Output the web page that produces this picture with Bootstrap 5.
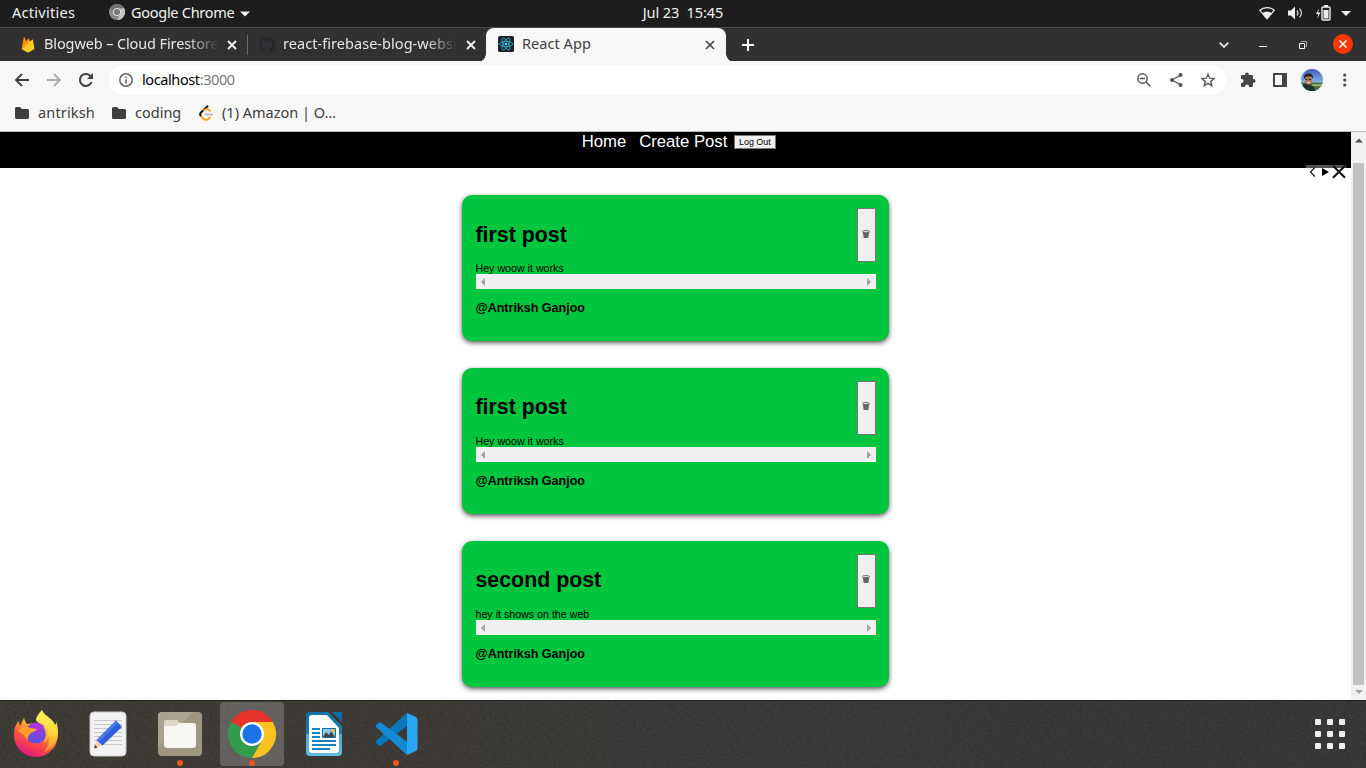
<!DOCTYPE html>
<html lang="en">
<head>
<meta charset="utf-8">
<meta name="viewport" content="width=device-width, initial-scale=1">
<title>React App</title>
<link href="https://cdn.jsdelivr.net/npm/bootstrap@5.3.0/dist/css/bootstrap.min.css" rel="stylesheet">
<style>
body{width:1366px;height:768px;overflow:hidden;font-family:"Noto Sans","Open Sans",sans-serif;font-size:14.5px;line-height:20px;color:#3c3c3c}
svg{display:block;flex:none}
.sysbar{height:27px;background:#1d1d1d;color:#f2f2f2}
.sysbar span,.tabstrip span{padding-bottom:3px}
.clock{letter-spacing:-.08px;white-space:pre}
.tabstrip{height:34px;background:#333031;border-top:1px solid #484647;color:#e8e8e8}
.tab-title{overflow:hidden}
.fade-end{-webkit-mask-image:linear-gradient(90deg,#000 82%,transparent);mask-image:linear-gradient(90deg,#000 82%,transparent)}
.tab-active{width:240px;height:34px;background:#f7f7f7;color:#414141;border-radius:8px 8px 0 0}
.tab-active::before,.tab-active::after{content:"";position:absolute;bottom:0;width:8px;height:8px}
.tab-active::before{left:-8px;background:radial-gradient(circle at 0 0,transparent 7.5px,#f7f7f7 8px)}
.tab-active::after{right:-8px;background:radial-gradient(circle at 100% 0,transparent 7.5px,#f7f7f7 8px)}
.tab-divider{width:1px;height:20px;background:#6b696a}
.win-close{width:20px;height:20px;background:#fa3600}
.toolbar{height:38px;background:#f7f7f7}
.omnibox{width:1118px;height:30px;border-radius:15px;background:#fff}
.bookmarks{height:33px;background:#f7f7f7;border-bottom:1px solid #b9bbb9}
.bookmarks span{padding-bottom:2px}
.viewport-area{height:568px;background:#fff;font-family:"Liberation Sans",Arial,sans-serif;color:#000}
.site-nav{height:36px;background:#000;color:#fff;font-size:16.7px;line-height:19px}
.logout{width:42px;height:14px;border:1px solid #767676;background:#efefef;color:#000;font-size:8.9px;line-height:12px;margin:3px 0 0 6.5px}
.post{width:427px;height:146px;border-radius:10px;background:#00c53f;padding:13px 13.5px 0;box-shadow:0 2px 5px rgba(0,0,0,.65)}
.post-head{height:54px}
.post-title{font-size:21.35px;font-weight:700;line-height:26px;margin:-2px 0 0}
.trash{width:19px;height:54px;background:#efefef;border:1px solid #767676}
.post-text{font-size:10.67px;line-height:12px;height:12px}
.hscroll{width:400px;height:15px;background:#f0f0f0}
.author{font-size:12.5px;font-weight:700;line-height:14px;margin:12px 0 0}
.vscroll{width:15px;background:#f1f1f1}
.thumb{width:11px;height:522px;background:#c1c1c1;margin-top:20px}
.adbar{top:33px;right:5px;width:40px;height:15px;background:linear-gradient(rgba(255,255,255,.32) 3px,transparent 3px)}
.dock{height:68px;background:linear-gradient(90deg,#413d38,#403d39 32%,#3b3d3a 50%,#393a37 75%,#373a38);border-top:1px solid #252421}
.dock-item{width:64px;height:64px;border-radius:4px;margin-right:8px}
.dock-active{background:rgba(255,255,255,.2)}
.dock-dot{width:6px;height:6px;border-radius:50%;background:#e95420;bottom:0;left:29px}
</style>
</head>
<body class="d-flex flex-column position-relative">

<div class="sysbar d-flex align-items-center justify-content-between position-relative">
  <div class="d-flex align-items-center">
    <span style="margin-left:12px;width:97px;letter-spacing:.28px">Activities</span>
    <svg class="mb-1" width="16" height="16" viewBox="0 0 16 16"><circle cx="8" cy="8" r="8" fill="#8a8a8a"/><path d="M8 0a8 8 0 0 1 7 4H8a4 4 0 0 0-4 3L1.4 4A8 8 0 0 1 8 0" fill="#6f6f6f"/><path d="M15 4a8 8 0 0 1-7 12l3.5-6L11 5z" fill="#c6c6c6"/><circle cx="8" cy="8" r="4" fill="#ddd"/><circle cx="8" cy="8" r="3" fill="#777"/></svg>
    <span style="margin-left:6px;width:109px;letter-spacing:-.28px">Google Chrome</span>
    <svg width="10" height="6"><path d="M0 .5h10L5 5.5z" fill="#f2f2f2"/></svg>
  </div>
  <span class="clock position-absolute start-50 translate-middle-x">Jul 23  15:45</span>
  <div class="d-flex align-items-center">
    <svg style="margin-bottom:2px" width="107" height="18" viewBox="0 0 107 18"><path d="M.8 6.3C5 2.6 11 2.6 15.2 6.3L8 14.8z" fill="none" stroke="#eee" stroke-width="1.2"/><path d="M3.3 9c3-2 6.4-2 9.400 0L8 14.8z" fill="#eee"/><path d="M29 6.500h3l4-4v13l-4-4h-3z" fill="#eee"/><path d="M38 6.500q2 2.500 0 5M40.500 4.500q4 4.500 0 9" fill="none" stroke="#ccc" stroke-width="1.300"/><path d="M60 4.500 57 10h2.300l-1 4.500 3.200-6H59z" fill="#eee"/><rect x="63" y="3" width="8" height="13" rx="1" fill="none" stroke="#eee" stroke-width="1.400"/><path d="M65 1h4v2h-4zM64.500 6h5v8.500h-5z" fill="#eee"/><path d="M82 7h10l-5 5z" fill="#eee"/></svg>
  </div>
</div>

<div class="tabstrip d-flex align-items-center">
  <svg style="margin-left:20px" width="16" height="17" viewBox="0 0 16 17"><path d="M1.500 13 4 .5 7 6z" fill="#ff8f00"/><path d="M1.500 13 8.600 2l2 4.600z" fill="#ffa000"/><path d="M1.500 13 12.800 3.200 14.500 13 8 16.700z" fill="#ffca28"/></svg>
  <span class="tab-title fade-end text-nowrap" style="margin-left:8px;width:175px;letter-spacing:-.12px">Blogweb – Cloud Firestore</span>
  <svg style="margin-left:8px" width="10" height="10"><path d="m1 1 8 8m0-8L1 9" stroke="#f4f4f4" stroke-width="1.800"/></svg>
  <div class="tab-divider" style="margin-left:10px"></div>
  <svg style="margin-left:11px" width="16" height="16" viewBox="0 0 16 16"><path fill="#24292e" d="M8 0C3.58 0 0 3.58 0 8c0 3.54 2.29 6.53 5.47 7.59.4.07.55-.17.55-.38v-1.5c-2.01.37-2.53-.49-2.69-.94-.09-.23-.48-.94-.82-1.13-.28-.15-.68-.52-.01-.53.63-.01 1.08.58 1.23.82.72 1.21 1.87.87 2.33.66.07-.52.28-.87.51-1.07-1.78-.2-3.64-.89-3.64-3.95 0-.87.31-1.59.82-2.15-.08-.2-.36-1.02.08-2.12 0 0 .67-.21 2.2.82a7.4 7.4 0 0 1 4 0c1.53-1.04 2.2-.82 2.2-.82.44 1.1.16 1.92.08 2.12.51.56.82 1.27.82 2.15 0 3.07-1.87 3.75-3.65 3.95.29.25.54.73.54 1.48v2.2c0 .21.15.46.55.38A8 8 0 0 0 8 0"/></svg>
  <span class="tab-title fade-end text-nowrap" style="margin-left:8px;width:174px;letter-spacing:.05px">react-firebase-blog-websi</span>
  <svg style="margin-left:9px" width="10" height="10"><path d="m1 1 8 8m0-8L1 9" stroke="#f4f4f4" stroke-width="1.800"/></svg>
  <div class="tab-active position-relative d-flex align-items-center" style="margin-left:10px">
    <svg style="margin-left:12px;margin-bottom:1px" width="16" height="16" viewBox="0 0 16 16"><rect width="16" height="16" rx="1.500" fill="#20232a"/><g fill="none" stroke="#35b3ce" stroke-width=".8"><ellipse cx="8" cy="8" rx="6.600" ry="2.600"/><ellipse cx="8" cy="8" rx="6.600" ry="2.600" transform="rotate(60 8 8)"/><ellipse cx="8" cy="8" rx="6.600" ry="2.600" transform="rotate(120 8 8)"/></g><circle cx="8" cy="8" r="1.300" fill="#61dafb"/></svg>
    <span style="margin-left:8px;width:183px;letter-spacing:.05px">React App</span>
    <svg width="10" height="10"><path d="m1 1 8 8m0-8L1 9" stroke="#444" stroke-width="1.700"/></svg>
  </div>
  <svg style="margin-left:16px" width="12" height="12"><path d="M6 0v12M0 6h12" stroke="#fff" stroke-width="1.900"/></svg>
  <div class="ms-auto d-flex align-items-center">
    <svg style="margin-right:30px" width="10" height="6"><path d="m.7.7 4.300 4.200L9.300.7" fill="none" stroke="#eee" stroke-width="1.800"/></svg>
    <svg style="margin-right:32px" width="8" height="6"><path d="M0 4.500h8" stroke="#fff"/></svg>
    <svg style="margin-right:26px" width="8" height="8"><path d="M.5 2.500h5v5h-5z" fill="none" stroke="#fff"/><path d="M2 .5h5.500V6" fill="none" stroke="#aaa"/></svg>
    <div class="win-close rounded-circle d-flex align-items-center justify-content-center" style="margin-right:13px;margin-bottom:2px"><svg width="8" height="8"><path d="m.5.5 7 7m0-7-7 7" stroke="#fff" stroke-width="1.500"/></svg></div>
  </div>
</div>

<div class="toolbar d-flex align-items-center">
  <svg style="margin-left:14px" width="16" height="16"><path d="M15 8H2m6-6L2 8l6 6" fill="none" stroke="#3f3f3f" stroke-width="1.800"/></svg>
  <svg style="margin-left:16px" width="16" height="16"><path d="M1 8h13M8 2l6 6-6 6" fill="none" stroke="#a9a9a9" stroke-width="1.800"/></svg>
  <svg style="margin-left:16px" width="16" height="16"><path d="M13.500 10A6 6 0 1 1 12 3.600L13.500 5" fill="none" stroke="#3f3f3f" stroke-width="2"/><path d="M15 1v6H9z" fill="#3f3f3f"/></svg>
  <div class="omnibox d-flex align-items-center" style="margin-left:14px">
    <svg style="margin-left:11px" width="14" height="14"><circle cx="7" cy="7" r="6.200" fill="none" stroke="#5f6368" stroke-width="1.500"/><path d="M6.200 6.200h1.600v4.300H6.200zm0-2.700h1.600V5H6.200z" fill="#5f6368"/></svg>
    <span style="margin-left:9px;color:#777;letter-spacing:-.4px;padding-bottom:2px"><span style="color:#000">localhost</span>:3000</span>
    <svg class="ms-auto" style="margin-right:18px" width="15" height="14"><circle cx="5.500" cy="5.500" r="4.700" fill="none" stroke="#555" stroke-width="1.500"/><path d="M3 5.500h5M9 9l4.300 4.300" stroke="#555" stroke-width="1.500"/></svg>
    <svg style="margin-right:18px" width="13" height="14"><path d="M11 2 2 7l9 5" fill="none" stroke="#555" stroke-width="1.300"/><g fill="#555"><circle cx="10.500" cy="2" r="2"/><circle cx="2" cy="7" r="2"/><circle cx="10.500" cy="12" r="2"/></g></svg>
    <svg style="margin-right:11px" width="14" height="14"><path d="m7 1.300 1.700 3.900 4.300.4-3.200 2.800 1 4.200L7 10.400l-3.800 2.200 1-4.200L1 5.600l4.300-.4z" fill="none" stroke="#555" stroke-width="1.400"/></svg>
  </div>
  <svg style="margin-left:14px" width="16" height="16" viewBox="0 0 16 16"><path d="M1 4.200Q1 3 2.200 3H5v-.700a1.900 1.900 0 0 1 3.800 0V3h3.100Q13 3 13 4.200V7h.6a1.900 1.900 0 0 1 0 3.800H13v3q0 1.200-1.100 1.200H9v-.6a2 2 0 0 0-4 0v.6H2.200Q1 15 1 13.800V11h.6a2 2 0 0 0 0-4H1z" fill="#454545"/></svg>
  <svg style="margin-left:17px" width="14" height="14"><path d="M1 1h12v12H1z" fill="none" stroke="#454545" stroke-width="2"/><path d="M9 0h5v14H9z" fill="#454545"/></svg>
  <svg style="margin-left:14px" width="22" height="22" viewBox="0 0 22 22"><defs><clipPath id="avatar"><circle cx="11" cy="11" r="11"/></clipPath><linearGradient id="sky" x2="0" y2="1"><stop stop-color="#3e56b9"/><stop offset=".6" stop-color="#86b4ea"/></linearGradient></defs><g clip-path="url(#avatar)"><path fill="url(#sky)" d="M0 0h22v22H0z"/><path fill="#4d7338" d="M0 13.500h22V22H0z"/><path fill="#9fc276" d="M11 15.500h11V17H11z"/><path fill="#1f3234" d="M1 22l1-6 4-2 6 3 3 5z"/><ellipse cx="7.500" cy="10.800" rx="3.600" ry="5" fill="#b77956"/><path fill="#211d1d" d="M3 10C2 2.500 13 3 12 9.500L10.500 7.500H5zM4.500 10h2v1h-2zm3.500 0h2v1H8z"/><path fill="#fff" d="M6.300 13.200h2.800v.8H6.300z"/></g></svg>
  <svg style="margin-left:20px" width="4" height="14"><g fill="#454545"><circle cx="1.700" cy="2" r="1.600"/><circle cx="1.700" cy="7" r="1.600"/><circle cx="1.700" cy="12" r="1.600"/></g></svg>
</div>

<div class="bookmarks d-flex align-items-center pb-1">
  <svg style="margin-left:15px" width="14" height="12"><path d="M0 1.500Q0 0 1.500 0H5l2 2h5.500Q14 2 14 3.500v7q0 1.500-1.500 1.500h-11Q0 12 0 10.500z" fill="#3f3f3f"/></svg>
  <span style="margin-left:9px;width:74px;letter-spacing:.15px">antriksh</span>
  <svg width="14" height="12"><path d="M0 1.500Q0 0 1.500 0H5l2 2h5.500Q14 2 14 3.500v7q0 1.500-1.500 1.500h-11Q0 12 0 10.500z" fill="#3f3f3f"/></svg>
  <span style="margin-left:9px;width:64px">coding</span>
  <svg width="14" height="16" viewBox="0 0 14 16"><path d="m9 .8-7 6.700q-1.700 1.800 0 3.800" fill="none" stroke="#111" stroke-width="2"/><path d="m4 5.500 2.500-1.300q1.500-.8 3 .3l2 1.700" fill="none" stroke="#ffa116" stroke-width="1.800"/><path d="m2 11.300 2.500 2.500Q7 15.800 9.500 13.800l2-1.800" fill="none" stroke="#ffa116" stroke-width="2"/><path d="M6 9.500h8" stroke="#b3b3b3" stroke-width="1.800"/></svg>
  <span class="text-nowrap" style="margin-left:9px;letter-spacing:0">(1) Amazon | O…</span>
</div>

<div class="viewport-area d-flex position-relative overflow-hidden">
  <main class="flex-grow-1 position-relative">
    <nav class="site-nav d-flex justify-content-center align-items-start" style="padding-left:6.5px">
      <span style="margin-right:13px">Home</span><span>Create Post</span>
      <button class="logout p-0 rounded-0 text-nowrap">Log Out</button>
    </nav>
    <div class="adbar position-absolute"><svg width="40" height="15"><path d="M8.800 2.500 4.500 7l4.300 4.500" fill="none" stroke="#111" stroke-width="1.200"/><path d="m27 .8 12 12m0-12-12 12" stroke="#111" stroke-width="2.100"/><path d="M16 3 23 7l-7 4z" fill="#000"/></svg></div>
    <div class="d-flex flex-column align-items-center" style="gap:27px;padding-top:27px">
      <article class="post">
        <div class="post-head d-flex align-items-center justify-content-between"><h1 class="post-title mt-0">first post</h1><button class="trash p-0 d-flex align-items-center justify-content-center" aria-label="Delete"><svg style="margin-bottom:2px" width="8" height="9"><path d="m.7 1.800 1 6.200h4.600l1-6.200z" fill="#666"/><ellipse cx="4" cy="1.700" rx="3.500" ry="1.100" fill="#eee" stroke="#444" stroke-width=".8"/></svg></button></div>
        <div class="post-text">Hey woow it works</div>
        <div class="hscroll d-flex justify-content-between align-items-center px-1"><svg width="6" height="8"><path d="M5 0v8L1 4z" fill="#a3a3a3"/></svg><svg width="6" height="8"><path d="M1 0v8l4-4z" fill="#a3a3a3"/></svg></div>
        <h3 class="author">@Antriksh Ganjoo</h3>
      </article>
      <article class="post">
        <div class="post-head d-flex align-items-center justify-content-between"><h1 class="post-title">first post</h1><button class="trash p-0 d-flex align-items-center justify-content-center" aria-label="Delete"><svg class="mb-1" width="8" height="9"><path d="m.7 1.800 1 6.200h4.600l1-6.200z" fill="#666"/><ellipse cx="4" cy="1.700" rx="3.500" ry="1.100" fill="#eee" stroke="#444" stroke-width=".8"/></svg></button></div>
        <div class="post-text">Hey woow it works</div>
        <div class="hscroll d-flex justify-content-between align-items-center px-1"><svg width="6" height="8"><path d="M5 0v8L1 4z" fill="#a3a3a3"/></svg><svg width="6" height="8"><path d="M1 0v8l4-4z" fill="#a3a3a3"/></svg></div>
        <h3 class="author">@Antriksh Ganjoo</h3>
      </article>
      <article class="post">
        <div class="post-head d-flex align-items-center justify-content-between"><h1 class="post-title">second post</h1><button class="trash p-0 d-flex align-items-center justify-content-center" aria-label="Delete"><svg class="mb-1" width="8" height="9"><path d="m.7 1.800 1 6.200h4.600l1-6.200z" fill="#666"/><ellipse cx="4" cy="1.700" rx="3.500" ry="1.100" fill="#eee" stroke="#444" stroke-width=".8"/></svg></button></div>
        <div class="post-text">hey it shows on the web</div>
        <div class="hscroll d-flex justify-content-between align-items-center px-1"><svg width="6" height="8"><path d="M5 0v8L1 4z" fill="#a3a3a3"/></svg><svg width="6" height="8"><path d="M1 0v8l4-4z" fill="#a3a3a3"/></svg></div>
        <h3 class="author">@Antriksh Ganjoo</h3>
      </article>
    </div>
  </main>
  <div class="vscroll d-flex flex-column align-items-center">
    <svg style="margin-top:6px" width="8" height="5"><path d="M0 4.500h8l-4-4z" fill="#505050"/></svg>
    <div class="thumb"></div>
    <svg style="margin-top:5px" width="8" height="5"><path d="M0 0h8L4 4z" fill="#a3a3a3"/></svg>
  </div>
</div>

<div class="dock d-flex align-items-start position-relative overflow-hidden">
  <svg class="position-absolute top-0 start-0" width="1366" height="68" style="opacity:.13"><filter id="grain"><feTurbulence type="fractalNoise" baseFrequency=".3 .5" numOctaves="4" seed="4"/><feColorMatrix values="0 0 0 0 0  0 0 0 0 0  0 0 0 0 0  2.5 0 0 0 -1"/></filter><rect width="1366" height="68" filter="url(#grain)"/></svg>
  <div class="d-flex position-relative" style="margin-left:4px;margin-top:1px">
    <div class="dock-item position-relative"><svg width="64" height="64" viewBox="0 0 64 64"><defs><linearGradient id="fox" x1=".8" x2=".25" y2="1"><stop stop-color="#fff44f"/><stop offset=".3" stop-color="#ffb52e"/><stop offset=".6" stop-color="#ff4f40"/><stop offset="1" stop-color="#e0128a"/></linearGradient><linearGradient id="flame" x2="0" y2="1"><stop stop-color="#fff65a"/><stop offset=".55" stop-color="#ffd43b"/><stop offset="1" stop-color="#ff8a30"/></linearGradient><radialGradient id="globe" cx=".55" cy=".15" r=".8"><stop stop-color="#b833e1"/><stop offset="1" stop-color="#5a51dd"/></radialGradient></defs><path fill="url(#fox)" d="M10 32q0-8 5-13 0 3 1 5l4-8q1 4 3 6l9-1 20 2q4 10 0 19A22 22 0 0 1 10 32"/><path fill="url(#flame)" d="M38 8c2 6 11 8 13 15q2-2 1-4c5 14 0 27-12 31 7-8 6-17 1-25-6-4-10-6-9-8q1-4 6-9"/><circle cx="32" cy="31" r="10.500" fill="url(#globe)"/><path fill="#ff9e2b" d="M14 29c4-5 8-5 12-3l7 1c-2 3-6 3-8 6q-2 2-1 5-3-2-4-5-3-2-6-4"/><path fill="#ffc22e" d="M39 24q5 2 6 8-1 6-5 9 4-8-1-17" opacity=".85"/></svg></div>
    <div class="dock-item position-relative"><svg width="64" height="64" viewBox="0 0 64 64"><rect x="14" y="10" width="36" height="44" rx="4" fill="#f3f3f3" stroke="#ccc"/><path d="M18 18.500h28M18 22.500h28M18 26.500h28M18 30.500h28M18 34.500h28M18 38.500h28M18 42.500h28" stroke="#c9c9c9"/><path d="m18 46.500 2.500-8.500 6 5.500z" fill="#f6d5b4"/><path d="m18 46.500 1-3.500 2.500 2.300z" fill="#333"/><path d="m20.500 38 6 5.500L46 25l-6-6.500z" fill="#2e61d9"/><path d="m20.500 38 2 2L42 21l-2-2.500z" fill="#4a7be9"/></svg></div>
    <div class="dock-item position-relative"><svg width="64" height="64" viewBox="0 0 64 64"><rect x="10" y="10" width="44" height="44" rx="4" fill="#9d9682"/><path d="M10 45V14q0-4 4-4h31z" fill="#aaa38f"/><path d="M16 20q0-2 2-2h11l4 4v4H16z" fill="#ddd7c8"/><path d="M16 24h11q2 0 4-3h15q2 0 2 2v20q0 3-3 3H19q-3 0-3-3z" fill="#f7f6f3"/></svg><div class="dock-dot position-absolute"></div></div>
    <div class="dock-item dock-active position-relative"><svg width="64" height="64" viewBox="0 0 64 64"><path d="M32 32 11.200 20A24 24 0 0 1 52.800 20z" fill="#e5352b"/><path d="M32 32 11.200 20A24 24 0 0 0 32 56L42.400 38z" fill="#319c4b"/><path d="M32 20h20.800A24 24 0 0 1 32 56l10.400-18z" fill="#fcc31e"/><circle cx="32" cy="32" r="12" fill="#fff"/><circle cx="32" cy="32" r="9.700" fill="#1a73e8"/></svg><div class="dock-dot position-absolute"></div></div>
    <div class="dock-item position-relative"><svg width="64" height="64" viewBox="0 0 64 64"><defs><linearGradient id="docBlue" x2="0" y2="1"><stop stop-color="#1173aa"/><stop offset=".5" stop-color="#187bb2"/><stop offset=".51" stop-color="#4ca9d9"/><stop offset="1" stop-color="#64bce3"/></linearGradient></defs><path d="M14 14q0-4 4-4h18l14 14v26q0 4-4 4H18q-4 0-4-4z" fill="url(#docBlue)"/><path d="M17 16q0-3 3-3h15l12 13v22q0 3-3 3H20q-3 0-3-3z" fill="#fff"/><path d="M40 10h10v10z" fill="#126ca2"/><path d="M20 27h8m-8 4h8m-8 4h8m-8 4h24m-24 4h24m-24 4h18" stroke="#1683bd" stroke-width="2"/><path d="M30.500 26.500h13v9h-13z" fill="#8dcbea" stroke="#126ca2"/><path d="m31 35 3-5 3 3 2-4 4 6z" fill="#444"/><path d="M40 27h3v3h-3z" fill="#f3bd20"/></svg></div>
    <div class="dock-item position-relative"><svg width="64" height="64" viewBox="0 0 64 64"><path d="m43 11-31 28q-1 1 0 2l3 2.500q1 .5 2 0L43 24z" fill="#0878bd"/><path d="m43 53-31-28q-1-1 0-2l3-2.500q1-.5 2 0L43 40z" fill="#138bd4"/><path d="m43 11 9 4q1.500 1 1.500 3v28q0 2-1.500 3l-9 4z" fill="#2aa7f2"/></svg><div class="dock-dot position-absolute"></div></div>
  </div>
  <svg class="ms-auto position-relative" style="margin-top:18px;margin-right:21px" width="30" height="30"><g fill="#eeeeec"><rect width="6" height="6" rx="1"/><rect x="12" width="6" height="6" rx="1"/><rect x="24" width="6" height="6" rx="1"/><rect y="12" width="6" height="6" rx="1"/><rect x="12" y="12" width="6" height="6" rx="1"/><rect x="24" y="12" width="6" height="6" rx="1"/><rect y="24" width="6" height="6" rx="1"/><rect x="12" y="24" width="6" height="6" rx="1"/><rect x="24" y="24" width="6" height="6" rx="1"/></g></svg>
</div>
<script src="https://cdn.jsdelivr.net/npm/bootstrap@5.3.0/dist/js/bootstrap.bundle.min.js"></script>
</body>
</html>
